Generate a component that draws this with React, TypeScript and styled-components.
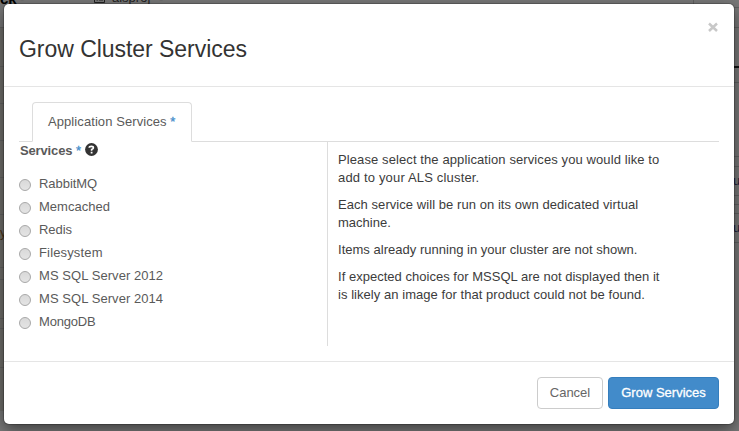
import React from "react";
import styled, { createGlobalStyle } from "styled-components";

const Global = createGlobalStyle`
  *, *::before, *::after { box-sizing: border-box; }
  html, body { margin: 0; height: 100%; overflow: hidden; }
  body { font-family: "Liberation Sans", Arial, sans-serif; font-size: 13px; line-height: 18px; color: #3c3c3c; }
  p, h1 { margin: 0; }
`;

const Page = styled.div`
  position: relative;
  width: 739px;
  height: 431px;
  padding: 4px 5px 7px 4px;
  background: #787878;
  overflow: hidden;
`;

const Rule = styled.div<{ $x: number; $y: number; $w?: number; $h?: number; $c?: string }>`
  position: absolute;
  left: ${(p) => p.$x}px;
  top: ${(p) => p.$y}px;
  width: ${(p) => p.$w ?? 6}px;
  height: ${(p) => p.$h ?? 1}px;
  background: ${(p) => p.$c ?? "#626262"};
`;

const Behind = styled.span<{ $x: number; $y: number; $size?: number; $bold?: boolean; $c?: string }>`
  position: absolute;
  left: ${(p) => p.$x}px;
  top: ${(p) => p.$y}px;
  font-size: ${(p) => p.$size ?? 13}px;
  font-weight: ${(p) => (p.$bold ? 700 : 400)};
  line-height: 16px;
  color: ${(p) => p.$c ?? "#222"};
`;

const ListIcon = styled.svg`
  position: absolute;
  left: 94px;
  top: -7px;
`;

const Modal = styled.section`
  position: relative;
  display: flex;
  flex-direction: column;
  width: 730px;
  height: 420px;
  background: #fff;
  border-radius: 5px;
  box-shadow: 0 0 0 1px rgba(0, 0, 0, 0.2), 0 5px 15px rgba(0, 0, 0, 0.5);
`;

const Header = styled.header`
  display: flex;
  flex: none;
  justify-content: space-between;
  align-items: flex-start;
  height: 83px;
  padding: 31px 15px 0 15px;
  border-bottom: 1px solid #e5e5e5;
`;

const Title = styled.h1`
  font-size: 23px;
  line-height: 28px;
  font-weight: 400;
  color: #333;
`;

const Close = styled.button`
  display: flex;
  margin-top: -14px;
  padding: 0;
  border: 0;
  background: none;
`;

const Body = styled.div`
  flex: 1;
  padding: 15px;
`;

const TabBar = styled.nav`
  display: flex;
  height: 40px;
  padding-left: 13px;
  border-bottom: 1px solid #ddd;
`;

const Tab = styled.div`
  width: 160px;
  height: 40px;
  padding: 10px 15px;
  border: 1px solid #ddd;
  border-bottom-color: #fff;
  border-radius: 4px 4px 0 0;
  background: #fff;
  color: #5a5a5a;
  white-space: nowrap;
`;

const Star = styled.span`
  color: #428bca;
  font-weight: 400;
  -webkit-text-stroke: 0.3px #428bca;
`;

const Columns = styled.div`
  display: flex;
`;

const Services = styled.div`
  width: 308px;
  height: 204px;
  padding-left: 1px;
  color: #5a5a5a;
`;

const Legend = styled.div`
  display: flex;
  gap: 4px;
  height: 31px;
  font-weight: 700;
`;

const HelpIcon = styled.svg`
  margin-top: 1px;
`;

const Option = styled.label`
  display: flex;
  gap: 8px;
  height: 23px;
  line-height: 21px;
`;

const Radio = styled.span`
  width: 12px;
  height: 12px;
  margin: 6px 0 0 -1px;
  border: 1px solid #a8a8a8;
  border-radius: 50%;
  background: linear-gradient(#d9d9d9, #e4e4e4);
`;

const Info = styled.div`
  flex: 1;
  display: flex;
  flex-direction: column;
  gap: 9px;
  padding: 9px 0 0 10px;
  border-left: 1px solid #ddd;
  white-space: nowrap;
`;

const Text = styled.span<{ $track?: number }>`
  letter-spacing: ${(p) => p.$track ?? 0}px;
`;

const Footer = styled.footer`
  display: flex;
  flex: none;
  justify-content: flex-end;
  gap: 5px;
  height: 63px;
  padding: 15px;
  border-top: 1px solid #e5e5e5;
`;

const Button = styled.button<{ $primary?: boolean }>`
  width: ${(p) => (p.$primary ? 111 : 66)}px;
  height: 32px;
  padding: 0;
  border: 1px solid ${(p) => (p.$primary ? "#357ebd" : "#ccc")};
  border-radius: 4px;
  background: ${(p) => (p.$primary ? "#428bca" : "#fff")};
  color: ${(p) => (p.$primary ? "#fff" : "#666")};
  font: 13px/18px "Liberation Sans", Arial, sans-serif;
  -webkit-text-stroke: ${(p) => (p.$primary ? "0.3px #fff" : "0")};
`;

const services: [string, number][] = [
  ["RabbitMQ", -0.05],
  ["Memcached", 0.03],
  ["Redis", -0.05],
  ["Filesystem", 0.15],
  ["MS SQL Server 2012", 0.06],
  ["MS SQL Server 2014", 0.06],
  ["MongoDB", -0.2],
];

const paragraphs: [string, number][][] = [
  [["Please select the application services you would like to", 0.1], ["add to your ALS cluster.", 0.17]],
  [["Each service will be run on its own dedicated virtual", 0.06], ["machine.", 0]],
  [["Items already running in your cluster are not shown.", 0.02]],
  [["If expected choices for MSSQL are not displayed then it", 0.02], ["is likely an image for that product could not be found.", 0.05]],
];

const leftRules = [27, 66, 103, 140, 177, 214, 267, 279, 318, 328, 367];
const rightRules = [7, 27, 82, 156, 166, 195, 204, 213, 242];

export default function App() {
  return (
    <Page>
      <Global />
      <Rule $x={0} $y={28} $w={4} $h={383} $c="#6f6e6a" />
      {leftRules.map((y) => <Rule key={y} $x={0} $y={y} />)}
      {rightRules.map((y) => <Rule key={y} $x={733} $y={y} />)}
      <Rule $x={733} $y={66} $h={2} $c="#111" />
      <Rule $x={693} $y={0} $w={1} $h={4} />
      <Behind $x={0} $y={-9} $size={15} $bold $c="#000">ck</Behind>
      <Behind $x={20} $y={-9}>-</Behind>
      <ListIcon width="12" height="10" viewBox="0 0 12 10">
        <path d="M.5 .5H10.5V9.5H.5ZM2.5 7H4M5 7H9" fill="none" stroke="#222" />
      </ListIcon>
      <Behind $x={112} $y={-10}>alsproj</Behind>
      <Behind $x={159} $y={-9}>-</Behind>
      <Behind $x={0} $y={225} $c="#4a3418">y</Behind>
      <Behind $x={733} $y={173} $c="#20203c">u</Behind>
      <Behind $x={733} $y={220} $c="#20203c">u</Behind>
      <Modal>
        <Header>
          <Title><Text $track={-0.04}>Grow Cluster Services</Text></Title>
          <Close aria-label="Close">
            <svg width="12" height="12" viewBox="0 0 12 12">
              <path d="M2 2.5L10 10M10 2.5L2 10" stroke="#c8c8c8" strokeWidth="2.5" />
            </svg>
          </Close>
        </Header>
        <Body>
          <TabBar>
            <Tab><Text $track={0.08}>Application Services</Text> <Star>*</Star></Tab>
          </TabBar>
          <Columns>
            <Services>
              <Legend>
                <span><Text $track={-0.15}>Services</Text> <Star>*</Star></span>
                <HelpIcon width="13" height="13" viewBox="0 0 13 13">
                  <circle cx="6.5" cy="6.5" r="6.4" fill="#333" />
                  <path d="M4.2 4.8Q4.2 3.4 6.4 3.4Q8.4 3.4 8.4 4.9Q8.4 5.8 6.6 6.4V7.7M5.7 9.6H7.5" fill="none" stroke="#fff" strokeWidth="1.6" />
                </HelpIcon>
              </Legend>
              {services.map(([name, track]) => (
                <Option key={name}><Radio /><Text $track={track}>{name}</Text></Option>
              ))}
            </Services>
            <Info>
              {paragraphs.map((lines) => (
                <p key={lines[0][0]}>
                  {lines.map(([line, track], i) => (
                    <React.Fragment key={line}>{i > 0 && <br />}<Text $track={track}>{line}</Text></React.Fragment>
                  ))}
                </p>
              ))}
            </Info>
          </Columns>
        </Body>
        <Footer>
          <Button>Cancel</Button>
          <Button $primary>Grow Services</Button>
        </Footer>
      </Modal>
    </Page>
  );
}
